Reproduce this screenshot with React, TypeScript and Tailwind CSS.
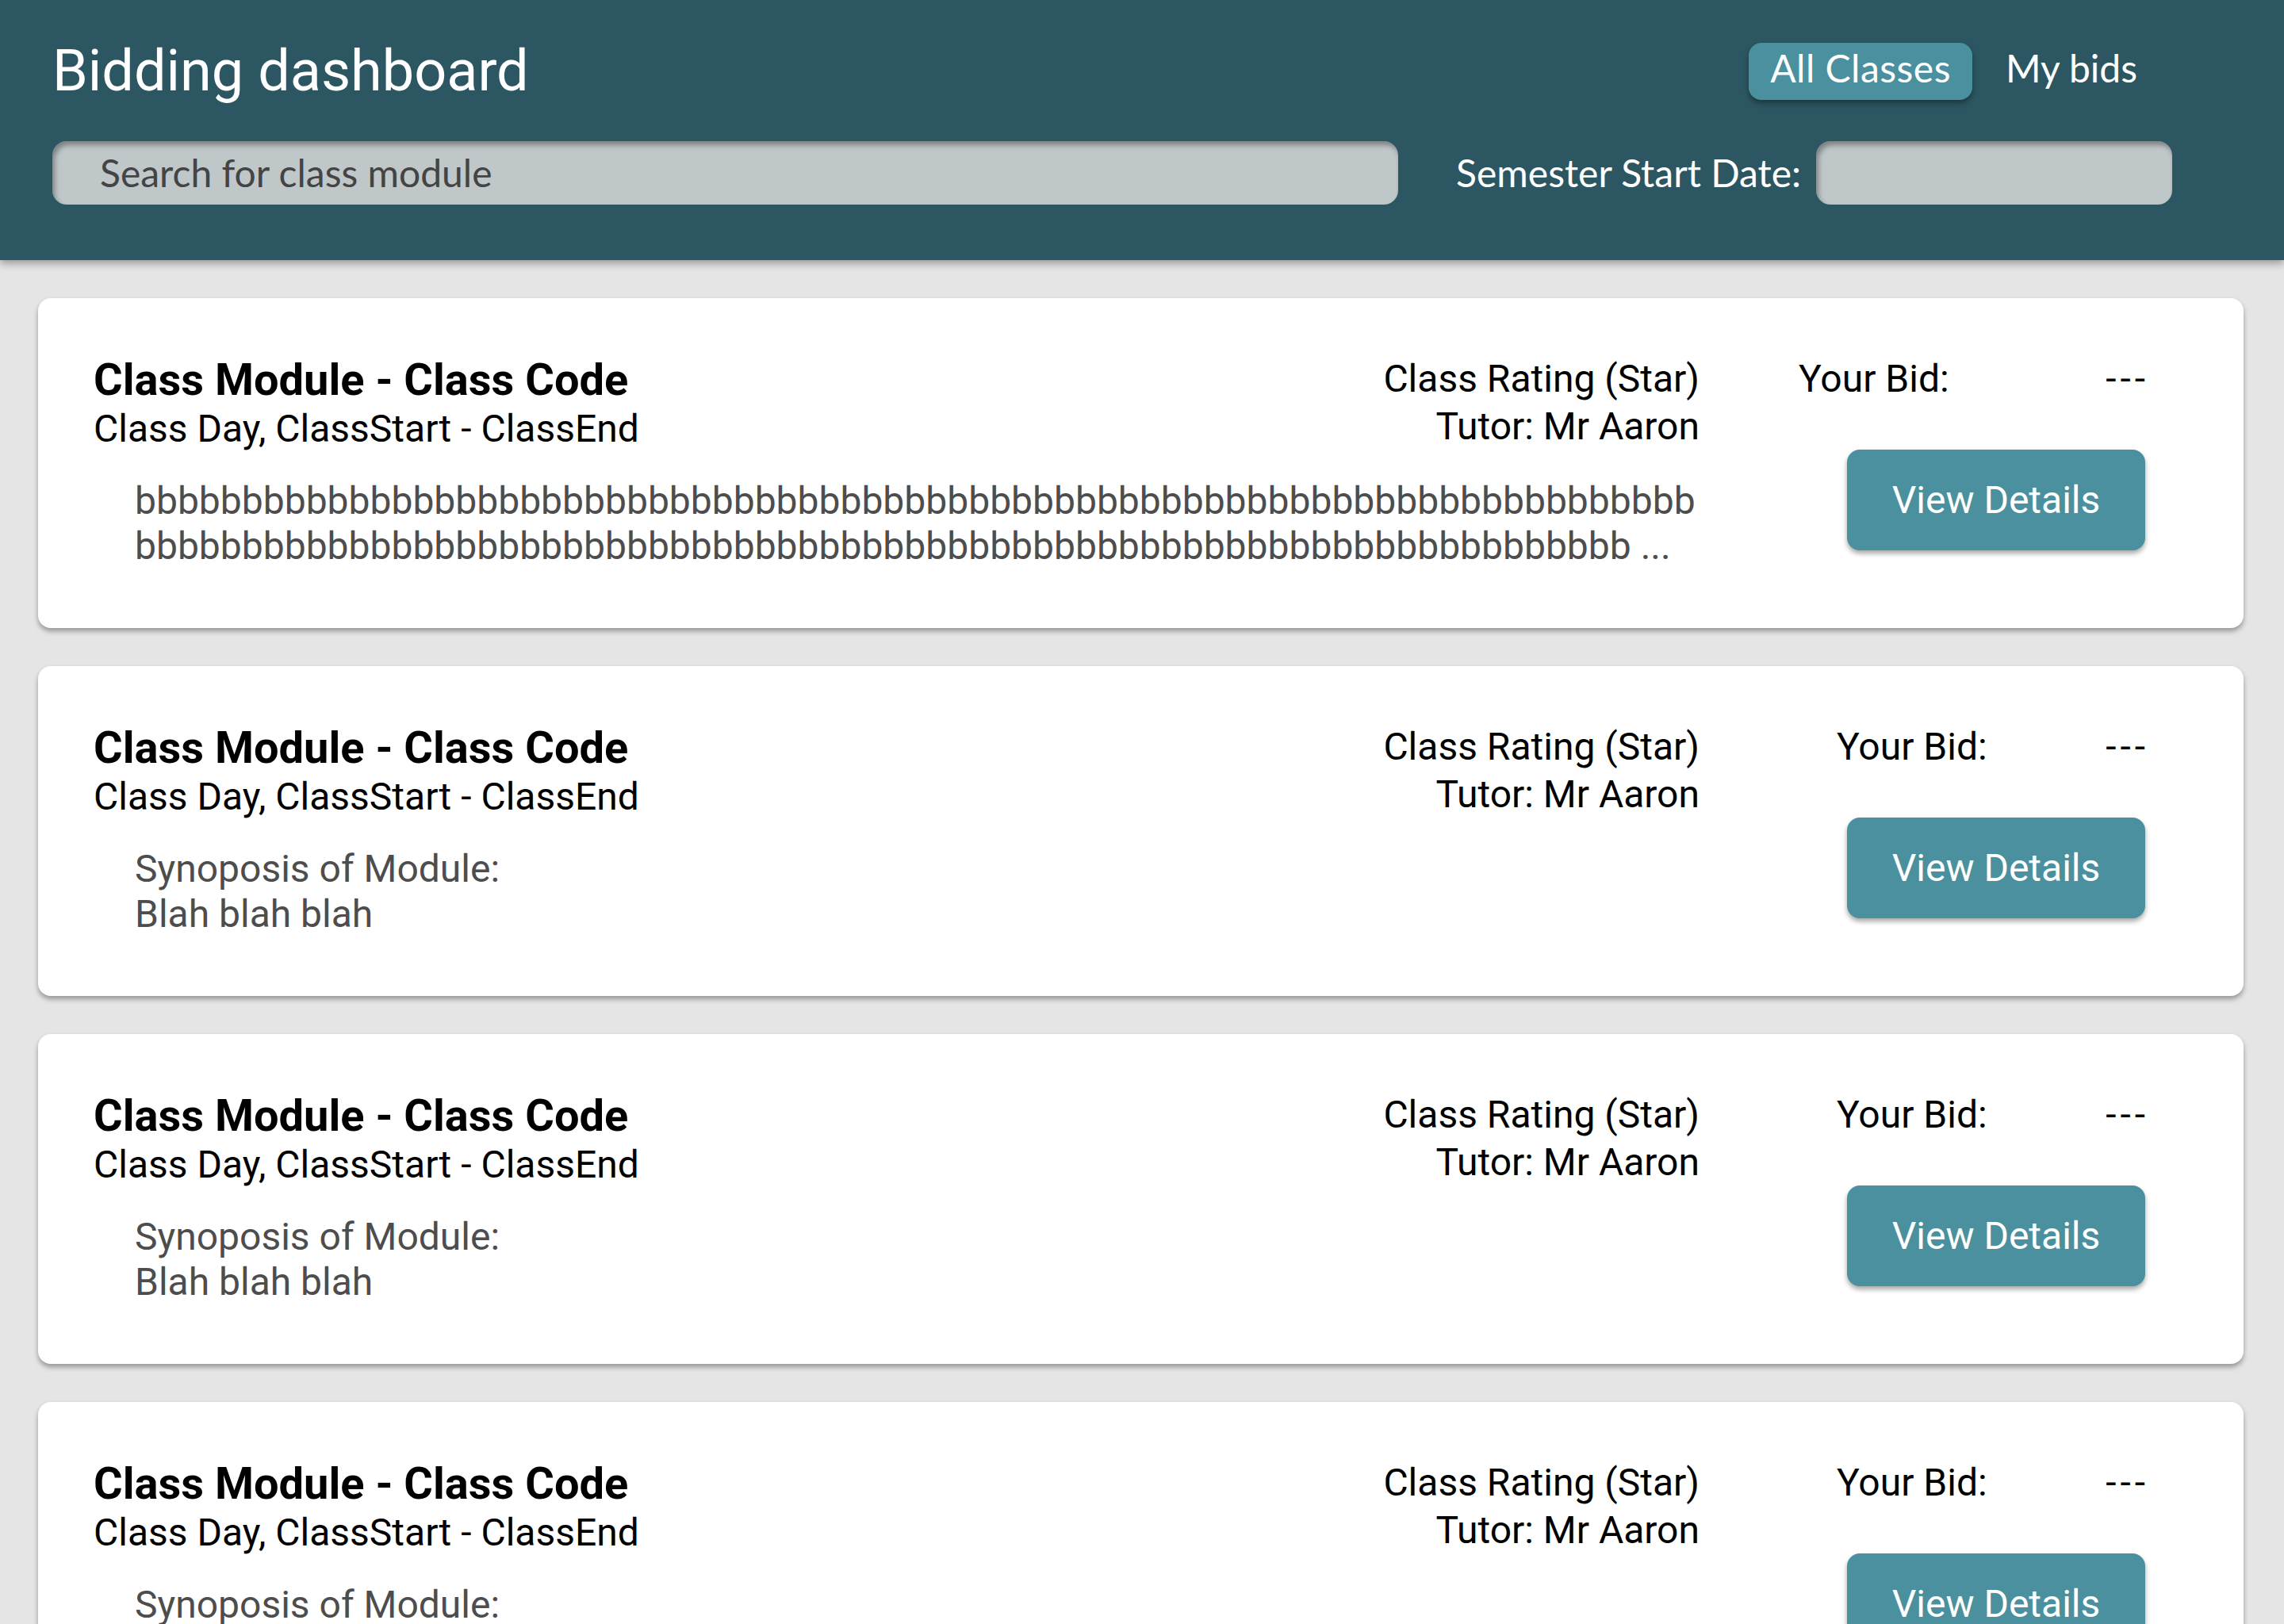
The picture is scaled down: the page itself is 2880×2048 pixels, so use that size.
import React from "react";

const longA = "b".repeat(73);
const longB = "b".repeat(70) + " ...";

type ClassCard = {
  lines: string[];
  bidWidth: string;
};

const cards: ClassCard[] = [
  { lines: [longA, longB], bidWidth: "w-[437px]" },
  { lines: ["Synoposis of Module:", "Blah blah blah"], bidWidth: "w-[389px]" },
  { lines: ["Synoposis of Module:", "Blah blah blah"], bidWidth: "w-[389px]" },
  { lines: ["Synoposis of Module:", "Blah blah blah"], bidWidth: "w-[389px]" },
];

// Header : titre + onglets, puis recherche et date de début
function Header() {
  return (
    <header className="relative z-10 bg-[#2c5661] px-[66px] pt-[54px] pb-[70px] shadow-[0_4px_10px_rgba(0,0,0,0.35)]">
      <div className="flex h-[72px] items-center justify-between">
        <h1 className="font-['Roboto',sans-serif] text-[72px] font-normal leading-none text-white">
          Bidding dashboard
        </h1>
        <nav className="mr-[119px] flex h-full items-center font-['Lato',sans-serif] text-[48px] text-white">
          <button className="flex h-[72px] w-[282px] items-center justify-center rounded-[16px] bg-[#4a909e] pb-[8px] tracking-[0.5px] shadow-[0_4px_6px_rgba(0,0,0,0.35)]">
            All Classes
          </button>
          <button className="ml-[42px] flex h-[72px] items-center pb-[8px]">My bids</button>
        </nav>
      </div>

      <div className="mt-[52px] flex h-[80px] items-center justify-between font-['Lato',sans-serif] text-[48px]">
        <div className="flex h-full w-[1697px] items-center rounded-[18px] bg-[#bfc7c9] pl-[60px] text-[#444] shadow-[inset_3px_5px_6px_rgba(0,0,0,0.35)]">
          Search for class module
        </div>
        <div className="mr-[75px] flex h-full items-center">
          <span className="text-white">Semester Start Date:</span>
          <div className="ml-[19px] h-full w-[449px] rounded-[18px] bg-[#bfc7c9] shadow-[inset_3px_5px_6px_rgba(0,0,0,0.35)]" />
        </div>
      </div>
    </header>
  );
}

function Card({ card }: { card: ClassCard }) {
  return (
    <div className="grid h-[416px] shrink-0 grid-cols-[1fr_auto_437px] grid-rows-[auto_1fr] gap-x-[125px] rounded-[16px] bg-white pt-[72px] pr-[124px] pl-[70px] font-['Roboto',sans-serif] shadow-[0_4px_6px_rgba(0,0,0,0.35)]">
      <div>
        <h2 className="text-[56px] font-bold leading-[62px] text-black">Class Module - Class Code</h2>
        <p className="text-[48px] leading-[62px] text-black">Class Day, ClassStart - ClassEnd</p>
      </div>

      <div className="text-right text-[48px] leading-[60px] text-black">
        <p>Class Rating (Star)</p>
        <p>Tutor: Mr Aaron</p>
      </div>

      <div className="row-span-2 flex flex-col items-end">
        <div className={`flex ${card.bidWidth} justify-between text-[48px] leading-[60px] text-black`}>
          <span>Your Bid:</span>
          <span className="mr-[-5px] tracking-[5px]">---</span>
        </div>
        <button className="mt-[59px] flex h-[127px] w-[376px] items-center justify-center rounded-[16px] bg-[#4a909e] text-[48px] text-white shadow-[0_4px_6px_rgba(0,0,0,0.35)]">
          View Details
        </button>
      </div>

      <div className="col-span-2 mt-[31px] ml-[52px] text-[48px] leading-[57px] whitespace-nowrap text-[#4d4d4d]">
        {card.lines.map((line, i) => (
          <p key={i}>{line}</p>
        ))}
      </div>
    </div>
  );
}

export default function App() {
  return (
    <div className="h-[2048px] overflow-hidden bg-[#e5e5e5]">
      <Header />
      <main className="flex flex-col gap-[48px] pt-[48px] pr-[51px] pl-[48px]">
        {cards.map((card, i) => (
          <Card key={i} card={card} />
        ))}
      </main>
    </div>
  );
}
